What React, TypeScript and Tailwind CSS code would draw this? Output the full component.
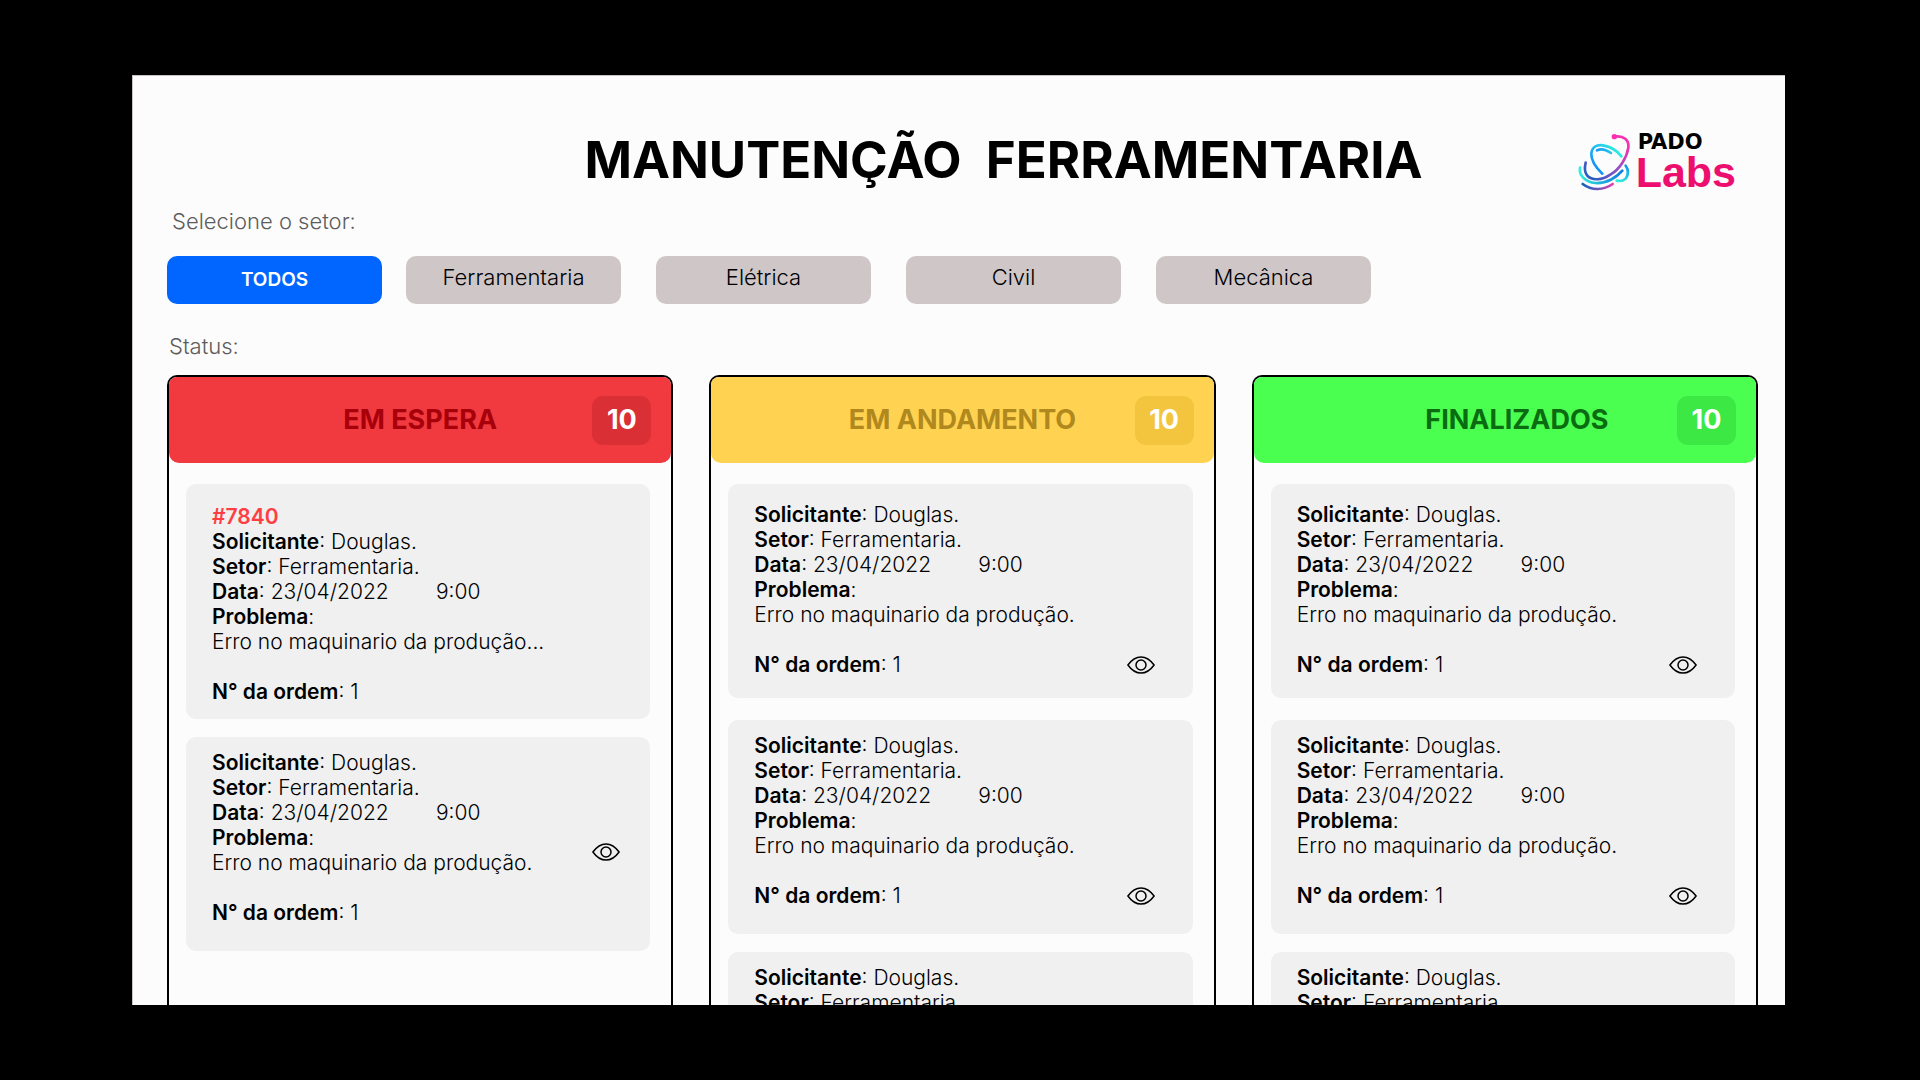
import { useState } from "react";

type Order = { code?: string; problem: string; eye: "middle" | "bottom" | "none"; pad: string };
type Column = {
  title: string;
  count: number;
  header: string;
  heading: string;
  badge: string;
  orders: Order[];
};

const PROBLEM = "Erro no maquinario da produção.";
const PAD_TALL = "pt-[18px] pb-[21px] mb-[22px]";
const PAD_SHORT = "pt-[13px] pb-[26px] mb-[18px]";

const doneOrders: Order[] = [
  { problem: PROBLEM, eye: "bottom", pad: PAD_TALL },
  { problem: PROBLEM, eye: "bottom", pad: PAD_SHORT },
  { problem: PROBLEM, eye: "bottom", pad: PAD_SHORT },
];

const columns: Column[] = [
  {
    title: "EM ESPERA",
    count: 10,
    header: "bg-[#f03a3f]",
    heading: "text-[#a8000b]",
    badge: "bg-[#da3035]",
    orders: [
      { code: "#7840", problem: "Erro no maquinario da produção...", eye: "none", pad: "pt-5 pb-[15px] mb-[18px]" },
      { problem: PROBLEM, eye: "middle", pad: PAD_SHORT },
    ],
  },
  {
    title: "EM ANDAMENTO",
    count: 10,
    header: "bg-[#ffd351]",
    heading: "text-[#b0881e]",
    badge: "bg-[#f3c53e]",
    orders: doneOrders,
  },
  {
    title: "FINALIZADOS",
    count: 10,
    header: "bg-[#4aff50]",
    heading: "pl-6 text-[#0b6b10]",
    badge: "bg-[#3ce844]",
    orders: doneOrders,
  },
];

function Logo() {
  return (
    <div className="flex items-center gap-1 pt-1">
      <svg viewBox="50 65 165 180" className="h-[60px] w-[55px]" fill="none" strokeWidth="8" strokeLinecap="round" aria-hidden="true">
        <defs>
          <linearGradient id="orbit" gradientUnits="userSpaceOnUse" x1="200" y1="85" x2="75" y2="200">
            <stop offset="0" stopColor="#ff2fae" />
            <stop offset="0.45" stopColor="#9b4fc4" />
            <stop offset="1" stopColor="#1f5fc0" />
          </linearGradient>
          <linearGradient id="heart" gradientUnits="userSpaceOnUse" x1="115" y1="190" x2="180" y2="125">
            <stop offset="0" stopColor="#0f8cf5" />
            <stop offset="0.6" stopColor="#22c3ee" />
            <stop offset="1" stopColor="#2ff0dc" />
          </linearGradient>
          <linearGradient id="inner" gradientUnits="userSpaceOnUse" x1="110" y1="120" x2="152" y2="128">
            <stop offset="0" stopColor="#159cf5" />
            <stop offset="1" stopColor="#27c6ee" />
          </linearGradient>
          <linearGradient id="outer" gradientUnits="userSpaceOnUse" x1="58" y1="175" x2="186" y2="190">
            <stop offset="0" stopColor="#2ff0dc" />
            <stop offset="1" stopColor="#1279e0" />
          </linearGradient>
          <linearGradient id="base" gradientUnits="userSpaceOnUse" x1="67" y1="221" x2="157" y2="221">
            <stop offset="0" stopColor="#1261bd" />
            <stop offset="0.5" stopColor="#6a55bb" />
            <stop offset="1" stopColor="#e83bb0" />
          </linearGradient>
          <linearGradient id="side" gradientUnits="userSpaceOnUse" x1="198" y1="166" x2="172" y2="212">
            <stop offset="0" stopColor="#1797ee" />
            <stop offset="1" stopColor="#2ff0dc" />
          </linearGradient>
        </defs>
        <path stroke="url(#heart)" d="M126 190C105 170 92 150 93 130C95 109 110 102 128 105C150 109 172 122 183 138" />
        <path stroke="url(#inner)" d="M110 120C122 114 140 120 152 128" />
        <path stroke="url(#outer)" d="M59 172C55 195 75 215 105 218C140 220 170 200 186 181" />
        <path stroke="url(#base)" d="M67 221C95 242 130 240 157 221" />
        <path stroke="url(#side)" d="M196 166C206 180 203 195 196 205C188 213 178 213 169 211" />
        <path stroke="url(#orbit)" d="M162 79C190 74 207 90 204 112C200 140 180 175 150 193C125 210 95 212 80 195C72 185 73 170 76 157" />
        <circle cx="162" cy="79" r="8" fill="#ff2fae" />
      </svg>
      <div className="flex flex-col">
        <span className="pl-0.5 font-['DejaVu_Sans'] text-[21px] leading-5 font-bold text-black">PADO</span>
        <span className="font-['Liberation_Sans'] text-[43px] leading-10 font-bold text-[#ed0f6f]">Labs</span>
      </div>
    </div>
  );
}

function EyeButton({ middle }: { middle: boolean }) {
  return (
    <button type="button" aria-label="Ver ordem" className={`flex items-center ${middle ? "pt-7" : "h-[25px]"}`}>
      <svg viewBox="0 0 28 18" className="h-[18px] w-7" fill="none" stroke="#000" strokeWidth="1.5" aria-hidden="true">
        <path strokeLinejoin="round" d="M0.9 9C4.5 4 9 0.9 14 0.9S23.5 4 27.1 9C23.5 14 19 17.1 14 17.1S4.5 14 0.9 9Z" />
        <circle cx="14" cy="9" r="5" />
      </svg>
    </button>
  );
}

function Field({ label, value = "" }: { label: string; value?: string }) {
  return (
    <p className="whitespace-pre">
      <strong className="font-semibold">{label}</strong>: {value}
    </p>
  );
}

function OrderCard({ order }: { order: Order }) {
  return (
    <li className={`flex justify-between rounded-[10px] bg-[#f0f0f0] pl-[26px] ${order.pad} ${order.eye === "bottom" ? "items-end pr-[38px]" : "items-center pr-[30px]"}`}>
      <div className="text-[21px] leading-[25px] font-light text-black">
        {order.code && <p className="font-semibold text-[#ff3e43]">{order.code}</p>}
        <Field label="Solicitante" value="Douglas." />
        <Field label="Setor" value="Ferramentaria." />
        <Field label="Data" value="23/04/2022        9:00" />
        <Field label="Problema" />
        <p className="mb-[25px]">{order.problem}</p>
        <Field label="N° da ordem" value="1" />
      </div>
      {order.eye !== "none" && <EyeButton middle={order.eye === "middle"} />}
    </li>
  );
}

function StatusColumn({ column }: { column: Column }) {
  return (
    <section className="overflow-hidden rounded-t-[10px] border-2 border-b-0 border-black">
      <header className={`grid h-[86px] grid-cols-[1fr_auto_1fr] items-center rounded-b-[10px] px-5 ${column.header}`}>
        <h2 className={`col-start-2 text-[27px] leading-8 font-bold ${column.heading}`}>{column.title}</h2>
        <span className={`flex h-[49px] w-[59px] items-center justify-center justify-self-end rounded-[11px] text-[27px] font-bold text-white ${column.badge}`}>
          {column.count}
        </span>
      </header>
      <ul className="pt-[21px] pr-[21px] pl-[17px]">
        {column.orders.map((order, i) => (
          <OrderCard key={i} order={order} />
        ))}
      </ul>
    </section>
  );
}

export default function App() {
  const [sector, setSector] = useState("TODOS");
  const tab = (name: string) => (
    <button
      key={name}
      type="button"
      onClick={() => setSector(name)}
      className={`h-12 w-[215px] rounded-[10px] ${
        sector === name ? "bg-[#0066ff] text-[19px] font-semibold text-white" : "bg-[#cfc6c7] pb-1.5 text-[22px] font-light text-black"
      }`}
    >
      {name}
    </button>
  );

  return (
    <div className="flex h-screen bg-black py-[75px] pr-[135px] pl-[132px] font-['Inter',sans-serif]">
      <main className="flex min-w-0 flex-1 flex-col overflow-hidden border-t border-l border-[#c9c2c2] bg-[#fcfcfc] pt-[52px] pr-[27px] pl-[34px]">
        <header className="flex h-16 items-center justify-end gap-[154px] pr-[22px]">
          <h1 className="text-[51px] leading-[64px] font-bold whitespace-pre text-black">MANUTENÇÃO  FERRAMENTARIA</h1>
          <Logo />
        </header>
        <p className="mt-[17px] pl-[5px] text-[22px] leading-[25px] font-light text-[#5c5c5c]">Selecione o setor:</p>
        <nav aria-label="Setor" className="mt-[22px] flex gap-[35px]">
          <div className="flex gap-6">{["TODOS", "Ferramentaria"].map(tab)}</div>
          {["Elétrica", "Civil", "Mecânica"].map(tab)}
        </nav>
        <p className="mt-[30px] pl-[2px] text-[22px] leading-[25px] font-light text-[#5c5c5c]">Status:</p>
        <div className="mt-4 grid min-h-0 flex-1 grid-cols-3 gap-9">
          {columns.map((column) => (
            <StatusColumn key={column.title} column={column} />
          ))}
        </div>
      </main>
    </div>
  );
}
